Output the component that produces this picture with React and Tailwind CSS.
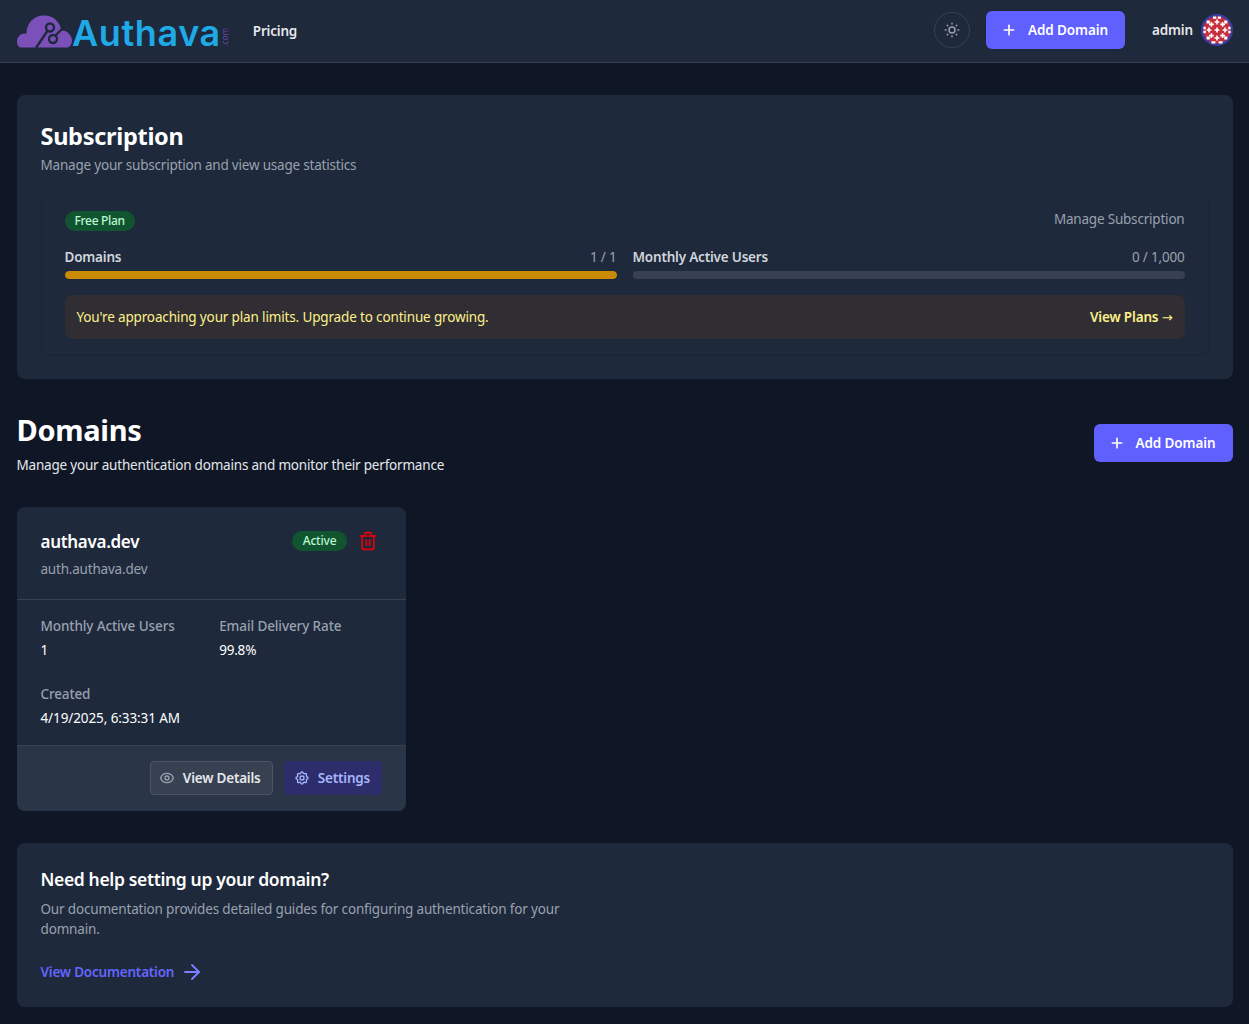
import React from 'react';
import { Plus, Trash2, ArrowRight } from 'lucide-react';
import { HiOutlineCog, HiOutlineEye, HiOutlineSun } from 'react-icons/hi';

const CloudLogo = () => (
  <svg width="55" height="33" viewBox="0 0 55 33" className="shrink-0">
    <path
      d="M3 32.5C0.5 31 0 28.5 0 26.5C0 22 3.5 18.5 8 18.5C8.5 18.5 9 18.5 9.5 18.7C9.5 8 17 0.5 27 0.5C33 0.5 38 3 41 7.5C43 10 44.5 13.5 45 15.5C50.5 15.5 55 20.5 55 25.5C55 28.5 53.5 31 51 32.5Z"
      fill="#7b51b9"
    />
    <path d="M42 6L52 17L44 14Z" fill="#1e293b" />
    <g fill="none" stroke="#1e293b" strokeWidth="2.4">
      <path d="M19 33L31 15" />
      <circle cx="33" cy="12.5" r="4" />
      <path d="M38 21L47 12" />
      <circle cx="36" cy="24" r="4" />
    </g>
  </svg>
);

const Avatar = () => {
  const plusses = [
    [13, 13], [27, 13], [13, 27], [27, 27], [20, 10], [20, 30], [10, 20], [30, 20], [20, 20],
  ];
  return (
    <svg width="32" height="32" viewBox="0 0 40 40" className="shrink-0">
      <circle cx="20" cy="20" r="18.5" fill="#c62f3d" stroke="#3d3c9e" strokeWidth="3" />
      {plusses.map(([x, y]) => (
        <path key={`${x}-${y}`} d={`M${x - 1} ${y - 3}h2v2h2v2h-2v2h-2v-2h-2v-2h2z`} fill="#fff" />
      ))}
      <path d="M15 3h4v3h-4zM21 3h4v3h-4zM7 8h4v4H7zM29 8h4v4h-4zM3 16h3v3H3zM3 21h3v3H3zM34 16h3v3h-3zM34 21h3v3h-3zM7 28h4v4H7zM29 28h4v4h-4zM13 34h5v3h-5zM22 34h5v3h-5z" fill="#fff" />
    </svg>
  );
};

const ProgressRow = ({ label, value, percent, color }) => (
  <div>
    <div className="flex justify-between items-center h-5 mb-1">
      <span className="text-[13.5px] leading-5 font-semibold text-gray-300 tracking-[-0.2px]">{label}</span>
      <span className="text-[13.5px] leading-5 text-gray-400 tracking-[-0.2px]">{value}</span>
    </div>
    <div className="h-2 rounded-full bg-[#374151] overflow-hidden">
      <div className={`h-2 rounded-full ${color}`} style={{ width: `${percent}%` }} />
    </div>
  </div>
);

const App = () => {
  return (
    <div className="min-h-screen bg-[#0f1626] text-white font-['Noto_Sans','Open_Sans',sans-serif]">
      {/* Header */}
      <header className="h-[63px] bg-[#1e293b] border-b border-[#374151] flex items-center justify-between pl-[17px] pr-[16px]">
        <div className="flex items-center">
          <div className="flex items-center h-[62px]">
            <CloudLogo />
            <span className="text-[36px] leading-none font-semibold text-[#1fa9e6] font-['Inter',sans-serif] tracking-[0.6px] mt-[3px]">Authava</span>
            <span className="[writing-mode:vertical-rl] rotate-180 text-[8px] leading-none text-[#6b46a8] mt-[12px]">.com</span>
          </div>
          <a className="ml-[24px] text-[13.5px] leading-5 font-semibold text-gray-200 tracking-[-0.2px]">Pricing</a>
        </div>
        <div className="flex items-center pb-[2px]">
          <button className="w-9 h-9 rounded-full border border-[#374151] flex items-center justify-center text-gray-400">
            <HiOutlineSun size={18} />
          </button>
          <button className="ml-4 w-[139px] h-[38px] rounded-md bg-[#6060ff] flex items-center gap-[11px] pl-[15px] text-[13.5px] leading-5 font-semibold text-white tracking-[-0.1px]">
            <Plus size={16} strokeWidth={2.5} />
            Add Domain
          </button>
          <span className="ml-[27px] text-[13.5px] leading-5 font-semibold text-gray-200 tracking-[-0.15px]">admin</span>
          <span className="ml-2"><Avatar /></span>
        </div>
      </header>

      <main className="max-w-[1216px] mx-auto pt-8 pb-4">
        {/* Subscription */}
        <section className="bg-[#1e293b] rounded-lg p-6 pt-[25px] h-[284px]">
          <h2 className="text-[23.5px] leading-[32px] font-bold tracking-[-0.3px]">Subscription</h2>
          <p className="text-[13.5px] leading-5 text-gray-400 mt-[3px] tracking-[-0.2px]">Manage your subscription and view usage statistics</p>
          <div className="mt-5 h-[160px] rounded-lg border border-[#1c2636] shadow-xs px-[23px] pt-[15px]">
            <div className="flex items-center justify-between">
              <span className="h-5 px-[10px] rounded-full bg-[#115530] text-[#bbf7d0] text-xs font-medium flex items-center tracking-[-0.3px]">Free Plan</span>
              <a className="-mt-[4px] text-[13.5px] leading-5 text-gray-400 tracking-[-0.2px]">Manage Subscription</a>
            </div>
            <div className="grid grid-cols-2 gap-4 mt-4">
              <ProgressRow label="Domains" value="1 / 1" percent={100} color="bg-[#ca8a04]" />
              <ProgressRow label="Monthly Active Users" value="0 / 1,000" percent={0} color="bg-[#ca8a04]" />
            </div>
            <div className="mt-4 h-11 rounded-lg bg-[#302e33] px-3 flex items-center justify-between">
              <p className="text-[13.5px] leading-5 text-[#fef08a] tracking-[-0.15px]">You're approaching your plan limits. Upgrade to continue growing.</p>
              <a className="text-[13.5px] leading-5 font-semibold text-[#fef08a] tracking-[-0.15px]">View Plans <span className="font-['DejaVu_Sans',sans-serif] text-[13px] font-normal">→</span></a>
            </div>
          </div>
        </section>

        {/* Domains heading */}
        <div className="flex items-start justify-between mt-8">
          <div>
            <h1 className="text-[29px] leading-9 font-bold mt-[1px] tracking-[-0.3px]">Domains</h1>
            <p className="text-[13.5px] leading-5 text-gray-200 mt-[7px] tracking-[-0.2px]">Manage your authentication domains and monitor their performance</p>
          </div>
          <button className="mt-[13px] w-[139px] h-[38px] rounded-md bg-[#6060ff] flex items-center gap-[11px] pl-[15px] text-[13.5px] leading-5 font-semibold text-white tracking-[-0.1px]">
            <Plus size={16} strokeWidth={2.5} />
            Add Domain
          </button>
        </div>

        {/* Domain card */}
        <div className="grid grid-cols-3 gap-6 mt-8">
          <div className="bg-[#1e293b] rounded-lg overflow-hidden">
            <div className="h-[93px] border-b border-[#374151] px-6 pt-6 flex justify-between">
              <div>
                <h3 className="text-[17px] leading-[22px] font-semibold tracking-[-0.3px]">authava.dev</h3>
                <p className="text-[13.5px] leading-5 text-gray-400 mt-[6px] tracking-[-0.2px]">auth.authava.dev</p>
              </div>
              <div className="flex items-start">
                <span className="h-5 px-[10.5px] rounded-full bg-[#115530] text-[#bbf7d0] text-xs font-medium flex items-center tracking-[-0.2px]">Active</span>
                <Trash2 size={20} strokeWidth={2} className="ml-[11px] mr-[4px] text-[#e7000b]" />
              </div>
            </div>
            <div className="h-[145px] px-6 pt-4">
              <div className="grid grid-cols-2 gap-x-4">
                <div>
                  <p className="text-[13.5px] leading-5 font-medium text-gray-400 tracking-[-0.1px]">Monthly Active Users</p>
                  <p className="text-[13.5px] leading-5 mt-1">1</p>
                </div>
                <div>
                  <p className="text-[13.5px] leading-5 font-medium text-gray-400 tracking-[-0.1px]">Email Delivery Rate</p>
                  <p className="text-[13.5px] leading-5 mt-1 tracking-[-0.2px]">99.8%</p>
                </div>
              </div>
              <p className="text-[13.5px] leading-5 font-medium text-gray-400 mt-6 tracking-[-0.15px]">Created</p>
              <p className="text-[13.5px] leading-5 mt-1 tracking-[-0.1px]">4/19/2025, 6:33:31 AM</p>
            </div>
            <div className="h-[66px] border-t border-[#374151] bg-[#2a3647] flex items-center justify-end gap-[11px] pr-6 pb-[1px]">
              <button className="h-[34px] w-[123px] rounded border border-[#4b5563] bg-[#374151] flex items-center gap-2 pl-2 text-[13.5px] leading-5 font-semibold text-gray-200 tracking-[-0.2px]">
                <HiOutlineEye size={16} className="text-gray-400" />
                View Details
              </button>
              <button className="h-[34px] w-[98px] rounded bg-[#2e2d6b] flex items-center gap-2 pl-[10px] text-[13.5px] leading-5 font-semibold text-[#a5b4fc] tracking-[-0.2px]">
                <HiOutlineCog size={16} />
                Settings
              </button>
            </div>
          </div>
        </div>

        {/* Help */}
        <section className="bg-[#1e293b] rounded-lg p-6 mt-8 h-[164px]">
          <h3 className="text-[17.5px] leading-6 font-semibold tracking-[-0.35px]">Need help setting up your domain?</h3>
          <p className="text-[13.5px] leading-5 text-gray-400 mt-2 max-w-[560px] tracking-[-0.17px]">Our documentation provides detailed guides for configuring authentication for your domnain.</p>
          <a className="flex items-center gap-[6px] mt-[21px] text-[13.5px] leading-5 font-semibold text-[#6366ff] tracking-[-0.2px]">
            View Documentation
            <ArrowRight size={24} strokeWidth={1.8} className="text-[#7c7fff]" />
          </a>
        </section>
      </main>
    </div>
  );
};

export default App;
